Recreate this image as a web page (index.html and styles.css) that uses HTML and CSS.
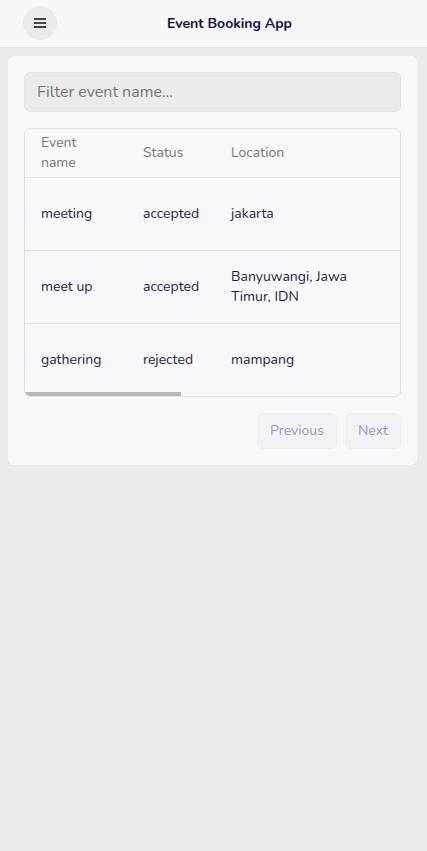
FILE: index.html
```html
<!DOCTYPE html>
<html lang="en">
<head>
<meta charset="utf-8">
<title>Event Booking App</title>
<link rel="stylesheet" href="styles.css">
</head>
<body>
<header class="topbar">
  <button class="menu-btn" aria-label="Menu">
    <svg width="12" height="12" viewBox="0 0 12 12"><path d="M0 2h12M0 6h12M0 10h12" stroke="#454545" stroke-width="1.8"/></svg>
  </button>
  <h1 class="title">Event Booking App</h1>
</header>
<main class="page">
  <section class="card">
    <input class="filter" type="text" placeholder="Filter event name...">
    <div class="table-wrap">
      <div class="table-scroll">
        <table class="events">
          <colgroup>
            <col class="c-name"><col class="c-status"><col class="c-loc"><col class="c-rest">
          </colgroup>
          <thead>
            <tr><th>Event name</th><th>Status</th><th>Location</th><th></th></tr>
          </thead>
          <tbody>
            <tr><td>meeting</td><td>accepted</td><td>jakarta</td><td></td></tr>
            <tr><td>meet up</td><td>accepted</td><td>Banyuwangi, Jawa Timur, IDN</td><td></td></tr>
            <tr><td>gathering</td><td>rejected</td><td>mampang</td><td></td></tr>
          </tbody>
        </table>
      </div>
      <div class="hscroll"><div class="hscroll-thumb"></div></div>
    </div>
    <div class="pager">
      <button class="pg-btn" disabled>Previous</button>
      <button class="pg-btn" disabled>Next</button>
    </div>
  </section>
</main>
</body>
</html>
```
FILE: styles.css
```css
* { box-sizing: border-box; }
html, body { margin: 0; padding: 0; }
body {
  background: #ebebeb;
  font-family: "Nunito", "Lato", "Open Sans", sans-serif;
  color: #1e1b4b;
  min-height: 851px;
}
.topbar {
  height: 48px;
  background: #f8f8f8;
  border-bottom: 1px solid #e6e6e6;
  display: flex;
  align-items: center;
  padding: 0 23px;
}
.menu-btn {
  width: 34px; height: 34px;
  border-radius: 50%;
  border: none;
  background: #ebebeb;
  display: flex; align-items: center; justify-content: center;
  padding: 0;
  margin-top: -1px;
}
.title {
  flex: 1;
  text-align: center;
  margin: 0;
  margin-top: -1px;
  padding-right: 2px;
  font-size: 14px;
  font-weight: 700;
  color: #13134a;
}
.page { padding: 8px 10px 8px 8px; }
.card {
  background: #f8f9fb;
  border-radius: 6px;
  padding: 16px;
  display: flex;
  flex-direction: column;
  gap: 16px;
}
.filter {
  height: 40px;
  width: 100%;
  border: 1px solid #e4e4e4;
  background: #ebebeb;
  border-radius: 6px;
  padding: 0 12px;
  font: inherit;
  font-size: 16px;
  color: #333;
}
.filter::placeholder { color: #777; }
.table-wrap {
  border: 1px solid #e2e2e6;
  border-radius: 6px;
  overflow: hidden;
}
.table-scroll { overflow: hidden; }
.hscroll { height: 4px; }
.hscroll-thumb { width: 156px; height: 4px; background: #b8b8b8; }
.events {
  width: 901px;
  table-layout: fixed;
  border-collapse: collapse;
  font-size: 14px;
  line-height: 20px;
}
.c-name { width: 102px; }
.c-status { width: 88px; }
.c-loc { width: 150px; }
.events th {
  text-align: left;
  font-weight: 400;
  color: #777;
  padding: 4px 16px;
  border-bottom: 1px solid #e2e2e6;
  vertical-align: middle;
}
.events td {
  padding: 16px;
  height: 73px;
  color: #1e1b4b;
  border-bottom: 1px solid #e2e2e6;
  vertical-align: middle;
}
.events tbody tr:last-child td {
  border-bottom: none;
  height: 68px;
  padding-bottom: 12px;
}
.pager {
  display: flex;
  justify-content: flex-end;
  gap: 8px;
}
.pg-btn {
  height: 36px;
  padding: 0 12px;
  border: 1px solid #eeeff2;
  border-radius: 6px;
  background: #f1f2f4;
  color: #9b9bb3;
  font: inherit;
  font-size: 14px;
}
.pg-btn:first-child { width: 80px; }
.pg-btn:last-child { width: 56px; }
```
